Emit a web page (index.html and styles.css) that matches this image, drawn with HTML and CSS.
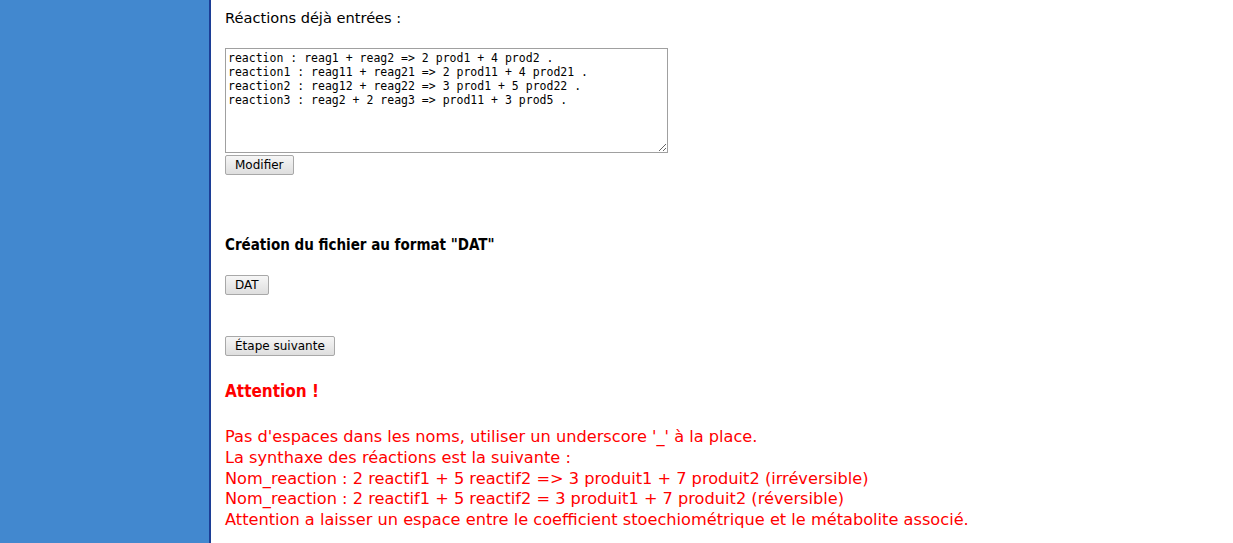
FILE: index.html
```html
<!DOCTYPE html>
<html>
<head>
<meta charset="utf-8">
<link rel="stylesheet" href="styles.css">
</head>
<body>
<div class="page">
  <div class="sidebar"></div>
  <div class="content">
    <p class="label">Réactions déjà entrées :</p>
    <textarea class="reactions">reaction : reag1 + reag2 =&gt; 2 prod1 + 4 prod2 .
reaction1 : reag11 + reag21 =&gt; 2 prod11 + 4 prod21 .
reaction2 : reag12 + reag22 =&gt; 3 prod1 + 5 prod22 .
reaction3 : reag2 + 2 reag3 =&gt; prod11 + 3 prod5 .</textarea>
    <div><button class="btn">Modifier</button></div>
    <h3 class="section-title">Création du fichier au format "DAT"</h3>
    <div class="dat"><button class="btn">DAT</button></div>
    <div class="next"><button class="btn">Étape suivante</button></div>
    <h3 class="warn-title">Attention !</h3>
    <p class="warn">Pas d'espaces dans les noms, utiliser un underscore '_' à la place.<br>
La synthaxe des réactions est la suivante :<br>
Nom_reaction : 2 reactif1 + 5 reactif2 =&gt; 3 produit1 + 7 produit2 (irréversible)<br>
Nom_reaction : 2 reactif1 + 5 reactif2 = 3 produit1 + 7 produit2 (réversible)<br>
Attention a laisser un espace entre le coefficient stoechiométrique et le métabolite associé.</p>
  </div>
</div>
</body>
</html>
```

FILE: styles.css
```css
html, body {
  margin: 0;
  padding: 0;
  background: #ffffff;
  height: 100%;
  overflow: hidden;
}
.page {
  display: flex;
  height: 543px;
  font-family: "DejaVu Sans", sans-serif;
  color: #000;
}
.sidebar {
  width: 209px;
  flex: none;
  background: #4288cf;
  border-right: 2px solid #1c3e96;
}
.content {
  padding-left: 14px;
  flex: 1;
}
.label {
  margin: 8px 0 0 0;
  font-size: 14.6px;
  line-height: 20px;
}
.reactions {
  display: block;
  margin: 20px 0 0 0;
  width: 443px;
  height: 105px;
  box-sizing: border-box;
  border: 1px solid #a0a0a0;
  padding: 2px 2px;
  font-family: "DejaVu Sans Mono", monospace;
  font-size: 11.5px;
  line-height: 14px;
  resize: both;
  color: #000;
}
.btn {
  font-family: "DejaVu Sans", sans-serif;
  font-size: 12px;
  height: 20px;
  padding: 0 9px;
  margin: 2px 0 0 0;
  background: linear-gradient(#f6f6f6, #dedede);
  border: 1px solid #a8a8a8;
  border-radius: 2px;
  color: #000;
}
.section-title {
  margin: 60px 0 0 0;
  font-size: 15px;
  font-stretch: condensed;
  line-height: 20px;
  font-weight: bold;
}
.dat .btn {
  margin-top: 20px;
}
.next {
  margin-top: 39px;
}
.warn-title {
  margin: 24px 0 0 0;
  font-size: 17px;
  font-stretch: condensed;
  line-height: 22px;
  color: #ff0000;
  font-weight: bold;
}
.warn {
  margin: 25px 0 0 0;
  font-size: 16.2px;
  line-height: 20.75px;
  color: #ff0000;
}
```
